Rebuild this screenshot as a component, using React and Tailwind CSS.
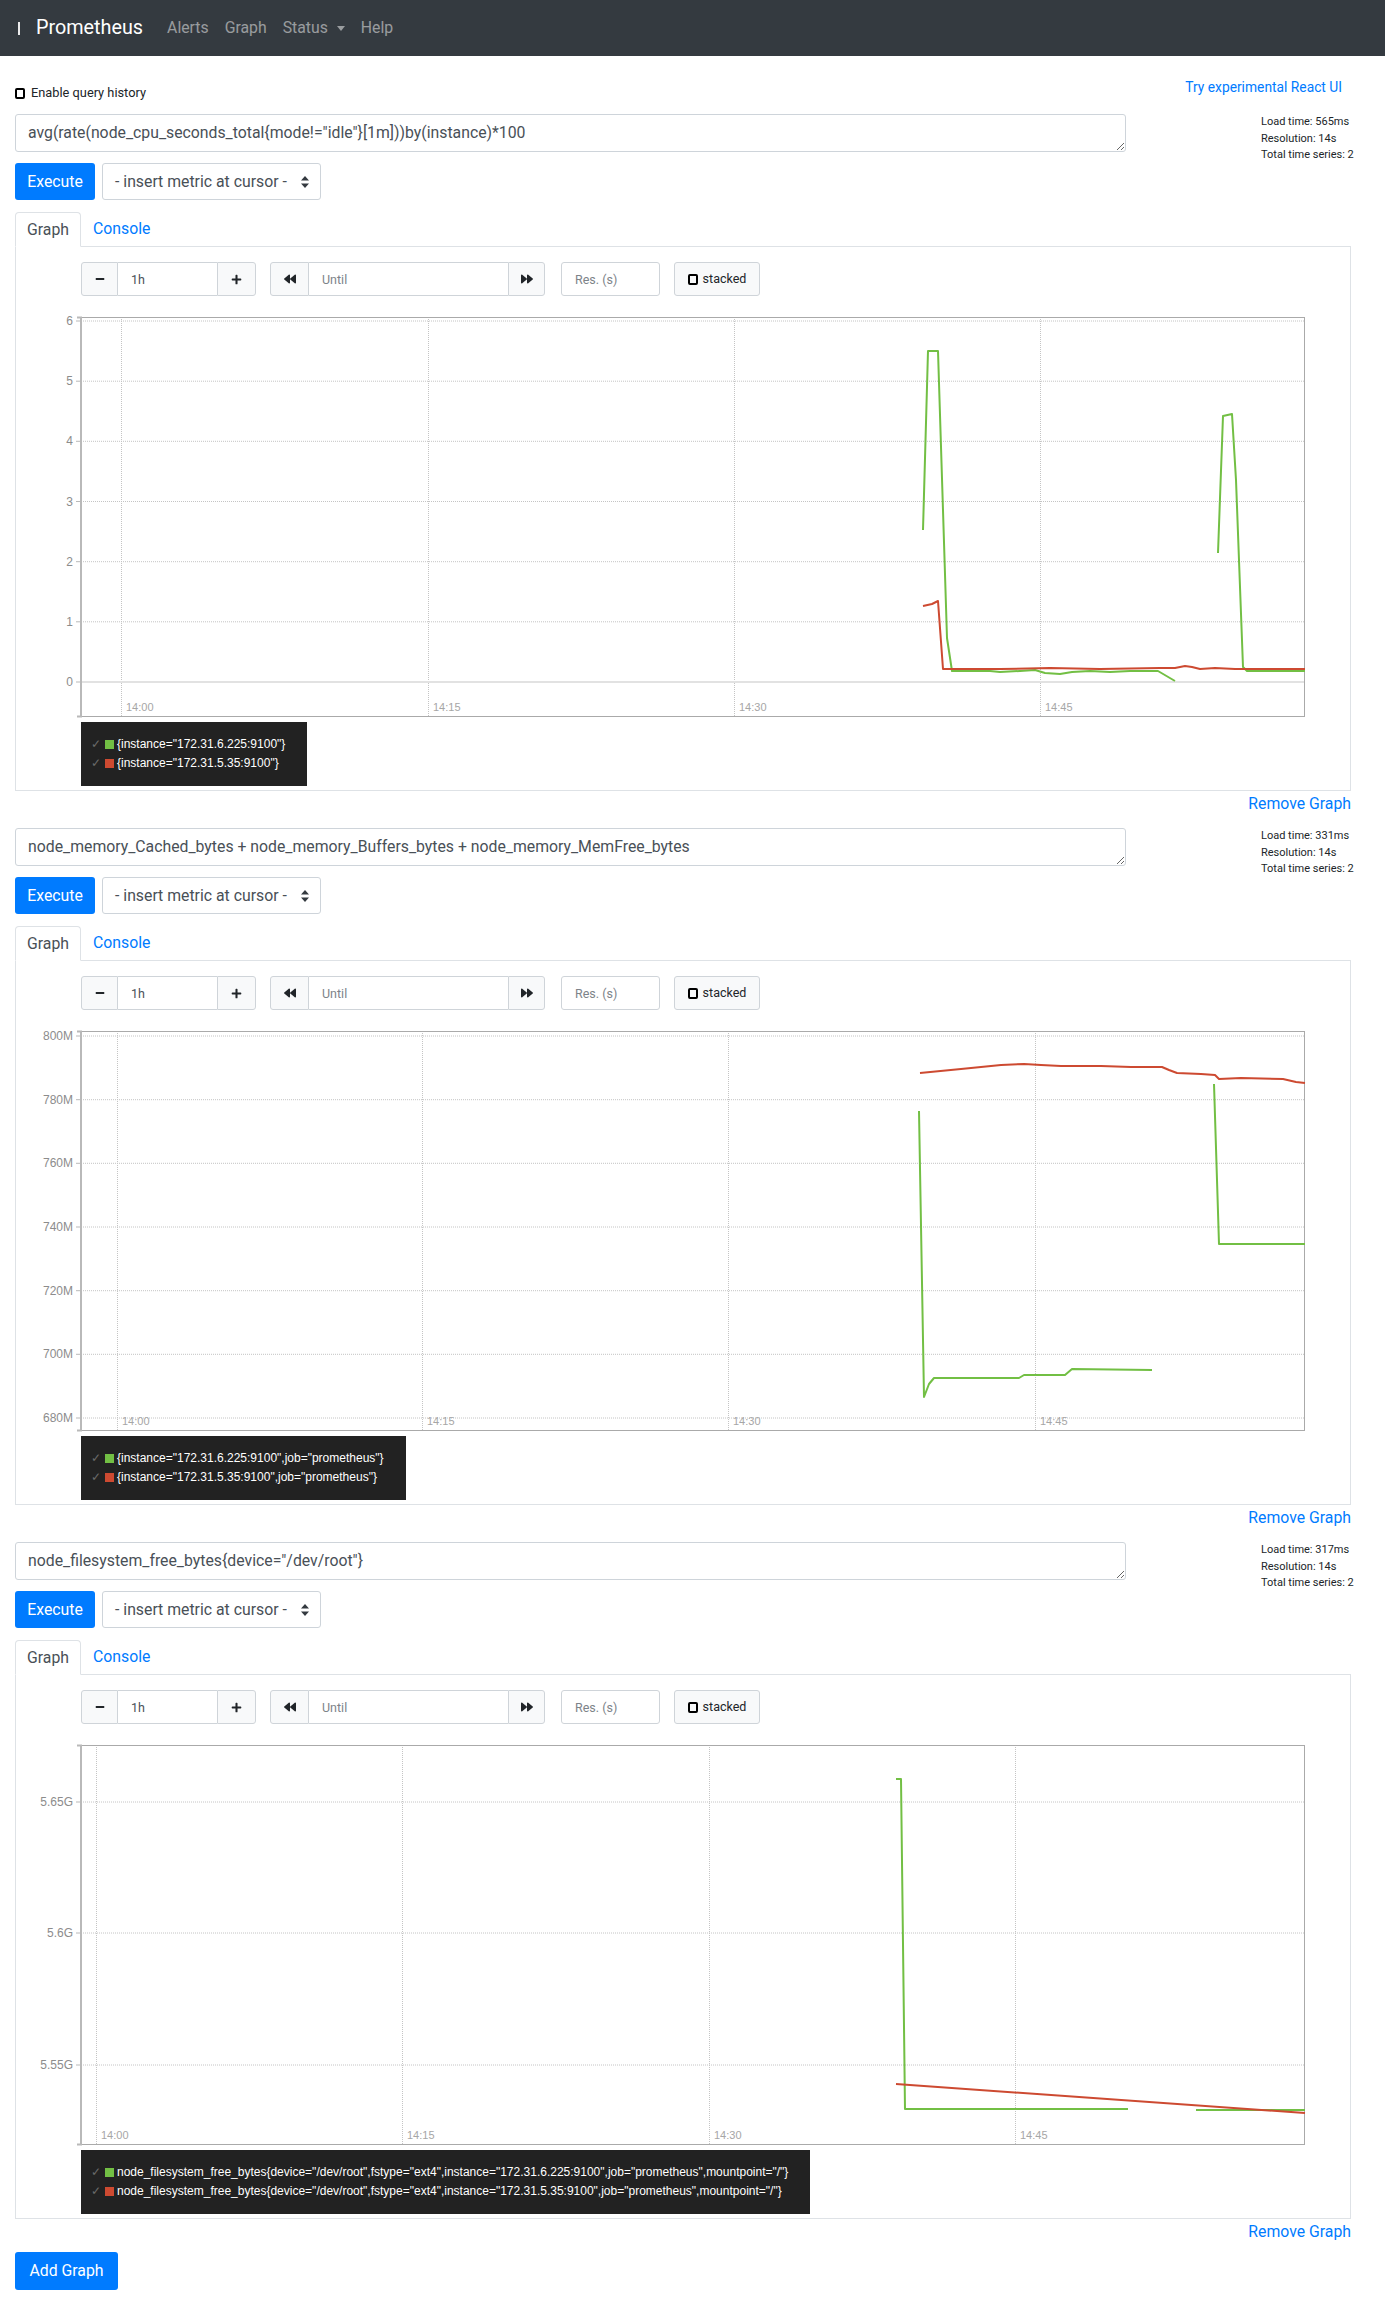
import React from "react";
import { FaMinus, FaPlus, FaBackward, FaForward } from "react-icons/fa";

const GREEN = "#72bf44";
const RED = "#cd4a31";

const toPath = (pts) => pts.map(([x, y], i) => `${i ? "L" : "M"}${x},${y}`).join(" ");

const charts = [
  {
    yTicks: [
      [4, "6"],
      [64.2, "5"],
      [124.3, "4"],
      [184.5, "3"],
      [244.7, "2"],
      [304.8, "1"],
      [365, "0"],
    ],
    xTicks: [40, 347, 653, 959],
    zero: 365,
    series: [
      {
        color: GREEN,
        segs: [
          [[842, 213], [847, 34], [857, 34], [866, 321], [871, 354], [909, 354], [919, 355], [939, 354], [954, 353], [964, 356], [979, 357], [991, 355], [1009, 354], [1029, 355], [1049, 354], [1077, 354], [1094, 364]],
          [[1137, 236], [1142, 99], [1151, 97], [1155, 163], [1162, 350], [1166, 354], [1224, 354]],
        ],
      },
      {
        color: RED,
        segs: [
          [[842, 289], [851, 287], [857, 284], [862, 352], [879, 352], [919, 352], [969, 351], [1019, 352], [1079, 351], [1094, 351], [1104, 349], [1111, 350], [1119, 352], [1134, 351], [1154, 352], [1224, 352]],
        ],
      },
    ],
  },
  {
    yTicks: [
      [5, "800M"],
      [68.7, "780M"],
      [132.3, "760M"],
      [196, "740M"],
      [259.7, "720M"],
      [323.3, "700M"],
      [387, "680M"],
    ],
    xTicks: [36, 341, 647, 954],
    series: [
      {
        color: GREEN,
        segs: [
          [[838, 80], [843, 366], [848, 353], [853, 347], [938, 347], [943, 344], [984, 344], [991, 338], [1071, 339]],
          [[1133, 53], [1138, 213], [1224, 213]],
        ],
      },
      {
        color: RED,
        segs: [
          [[839, 42], [880, 38], [920, 34], [943, 33], [960, 34], [980, 35], [1020, 35], [1050, 36], [1081, 36], [1088, 39], [1096, 42], [1120, 43], [1134, 44], [1138, 48], [1160, 47], [1202, 48], [1215, 51], [1224, 52]],
        ],
      },
    ],
  },
  {
    yTicks: [
      [57, "5.65G"],
      [188, "5.6G"],
      [320, "5.55G"],
    ],
    xTicks: [15, 321, 628, 934],
    series: [
      {
        color: GREEN,
        segs: [
          [[815, 34], [820, 34], [824, 364], [1047, 364]],
          [[1115, 365], [1224, 365]],
        ],
      },
      {
        color: RED,
        segs: [[[815, 339], [1224, 368]]],
      },
    ],
  },
];

const xLabels = ["14:00", "14:15", "14:30", "14:45"];

function Chart({ chart }) {
  return (
    <svg width="1224" height="400" className="block overflow-visible">
      {chart.yTicks.map(([y]) => (
        <line key={"gy" + y} x1="0" x2="1224" y1={y} y2={y} stroke="#c4c4c4" strokeDasharray="1 1" />
      ))}
      {chart.xTicks.map((x) => (
        <line key={"gx" + x} x1={x + 0.5} x2={x + 0.5} y1="0" y2="400" stroke="#c4c4c4" strokeDasharray="1 1" />
      ))}
      {chart.zero != null && (
        <line x1="0" x2="1224" y1={chart.zero} y2={chart.zero} stroke="#e2e2e2" strokeWidth="2" />
      )}
      <rect x="0.5" y="0.5" width="1223" height="399" fill="none" stroke="#aaaaaa" />
      <path d="M-4,0.5 H0 V399.5 H-4" fill="none" stroke="#b9b9b9" strokeWidth="2" />
      {chart.yTicks.map(([y, t]) => (
        <g key={"ty" + y}>
          <line x1="-5" x2="0" y1={y} y2={y} stroke="#b9b9b9" />
          <text x="-8" y={y + 4} textAnchor="end" fontSize="12" fill="#8c8c8c" fontFamily="Liberation Sans, Arial, sans-serif">
            {t}
          </text>
        </g>
      ))}
      {chart.xTicks.map((x, i) => (
        <text key={"tx" + x} x={x + 5} y="394" fontSize="11" fill="#a6a6a6" fontFamily="Liberation Sans, Arial, sans-serif">
          {xLabels[i]}
        </text>
      ))}
      {chart.series.map((s, si) =>
        s.segs.map((seg, i) => (
          <path key={si + "-" + i} d={toPath(seg)} fill="none" stroke={s.color} strokeWidth="2" strokeLinejoin="round" />
        ))
      )}
    </svg>
  );
}

function Legend({ items }) {
  return (
    <div className="mt-[5px] w-fit bg-[#222222] py-[13px] pl-[10px] pr-[22px] font-['Liberation_Sans',Arial,sans-serif] text-[12px] leading-[19px] text-white">
      {items.map((label, i) => (
        <div key={label} className="flex items-center">
          <span className="w-[14px] text-[12px] text-[#6a6a6a]">✓</span>
          <span className={i === 0 ? "h-[9px] w-[9px] bg-[#72bf44]" : "h-[9px] w-[9px] bg-[#cd4a31]"} />
          <span className="ml-[3px] whitespace-nowrap">{label}</span>
        </div>
      ))}
    </div>
  );
}

function Box() {
  return <span className="inline-block h-[11px] w-[10px] rounded-[2px] border-2 border-black" />;
}

function Controls() {
  const btn = "flex h-[34px] items-center justify-center border border-[#cfd4d9] bg-[#f8f9fa] text-[#212529]";
  const input = "h-[34px] border-y border-[#cfd4d9] bg-white px-[13px] text-[12.5px] text-[#495057] outline-none placeholder:text-[#7d8389]";
  return (
    <div className="flex h-[34px] items-center">
      <div className="flex">
        <div className={btn + " w-[37px] rounded-l-[3px]"}>
          <FaMinus size={10} />
        </div>
        <input readOnly defaultValue="1h" className={input + " w-[99px]"} />
        <div className={btn + " w-[39px] rounded-r-[3px]"}>
          <FaPlus size={11} />
        </div>
      </div>
      <div className="ml-[14px] flex">
        <div className={btn + " w-[39px] rounded-l-[3px]"}>
          <FaBackward size={12} />
        </div>
        <input readOnly placeholder="Until" className={input + " w-[199px]"} />
        <div className={btn + " w-[37px] rounded-r-[3px]"}>
          <FaForward size={12} />
        </div>
      </div>
      <input readOnly placeholder="Res. (s)" className={input + " ml-[16px] w-[99px] rounded-[3px] border-x"} />
      <div className={btn + " ml-[14px] w-[86px] gap-[5px] rounded-[3px] text-[12.5px]"}>
        <Box />
        <span>stacked</span>
      </div>
    </div>
  );
}

function Arrows() {
  return (
    <svg width="8" height="12" viewBox="0 0 8 12" className="block">
      <path d="M4 0 L8 4.5 H0 Z M4 12 L8 7.5 H0 Z" fill="#343a40" />
    </svg>
  );
}

function Block({ query, load, chart, legend }) {
  return (
    <div>
      <div className="flex h-[38px] items-start">
        <textarea
          readOnly
          rows={1}
          defaultValue={query}
          className="h-[38px] w-[1111px] rounded-[3px] border border-[#ced4da] px-[12px] py-[6px] text-[15.8px] leading-[24px] text-[#495057] outline-none"
        />
        <div className="ml-auto w-[90px] whitespace-nowrap text-[11px] leading-[16.5px]">
          <div>Load time: {load}</div>
          <div>Resolution: 14s</div>
          <div>Total time series: 2</div>
        </div>
      </div>
      <div className="mt-[11px] flex gap-[7px]">
        <div className="flex h-[37px] w-[80px] items-center justify-center rounded-[3px] bg-[#007bff] text-white">Execute</div>
        <div className="flex h-[37px] w-[219px] items-center justify-between rounded-[3px] border border-[#ced4da] pl-[12px] pr-[11px] text-[#495057]">
          <span>- insert metric at cursor -</span>
          <Arrows />
        </div>
      </div>
      <div className="mt-[12px] flex h-[35px] border-b border-[#dee2e6]">
        <div className="-mb-px h-[35px] rounded-t-[4px] border border-[#dee2e6] border-b-white bg-white px-[11px] leading-[33px] text-[#495057]">
          Graph
        </div>
        <div className="px-[12px] leading-[34px] text-[#007bff]">Console</div>
      </div>
      <div className="border-x border-b border-[#dee2e6] pb-[4px] pl-[65px] pr-[45px] pt-[15px]">
        <Controls />
        <div className="mt-[21px]">
          <Chart chart={chart} />
        </div>
        <Legend items={legend} />
      </div>
      <div className="h-[25px] text-right leading-[25px] text-[#007bff]">Remove Graph</div>
    </div>
  );
}

export default function App() {
  return (
    <div className="min-h-[2311px] bg-white font-['Roboto','Open_Sans',sans-serif] text-[15.8px] text-[#212529]">
      <nav className="flex h-[56px] items-center bg-[#343a40] px-[16px]">
        <span className="ml-[2px] h-[13px] w-[2px] bg-white/90" />
        <span className="ml-[16px] mr-[16px] text-[19.8px] text-white">Prometheus</span>
        <span className="px-[8px] text-white/50">Alerts</span>
        <span className="px-[8px] text-white/50">Graph</span>
        <span className="flex items-center px-[8px] text-white/50">
          Status
          <span className="ml-[9px] h-0 w-0 border-x-[4px] border-t-[5px] border-x-transparent border-t-white/50" />
        </span>
        <span className="px-[8px] text-white/50">Help</span>
      </nav>
      <div className="w-[1351px] pl-[15px]">
        <div className="mt-[20px] flex h-[28px] items-start justify-between">
          <div className="mt-[6px] flex items-center gap-[6px] text-[12.8px] leading-[22px]">
            <Box />
            <span>Enable query history</span>
          </div>
          <div className="mr-[9px] text-[13.8px] leading-[22px] text-[#007bff]">Try experimental React UI</div>
        </div>
        <div className="mt-[10px] flex flex-col gap-[12px]">
          <Block
            query={'avg(rate(node_cpu_seconds_total{mode!="idle"}[1m]))by(instance)*100'}
            load="565ms"
            chart={charts[0]}
            legend={['{instance="172.31.6.225:9100"}', '{instance="172.31.5.35:9100"}']}
          />
          <Block
            query="node_memory_Cached_bytes + node_memory_Buffers_bytes + node_memory_MemFree_bytes"
            load="331ms"
            chart={charts[1]}
            legend={[
              '{instance="172.31.6.225:9100",job="prometheus"}',
              '{instance="172.31.5.35:9100",job="prometheus"}',
            ]}
          />
          <Block
            query={'node_filesystem_free_bytes{device="/dev/root"}'}
            load="317ms"
            chart={charts[2]}
            legend={[
              'node_filesystem_free_bytes{device="/dev/root",fstype="ext4",instance="172.31.6.225:9100",job="prometheus",mountpoint="/"}',
              'node_filesystem_free_bytes{device="/dev/root",fstype="ext4",instance="172.31.5.35:9100",job="prometheus",mountpoint="/"}',
            ]}
          />
        </div>
        <div className="mt-[8px] flex h-[38px] w-[103px] items-center justify-center rounded-[3px] bg-[#007bff] text-white">
          Add Graph
        </div>
      </div>
    </div>
  );
}
